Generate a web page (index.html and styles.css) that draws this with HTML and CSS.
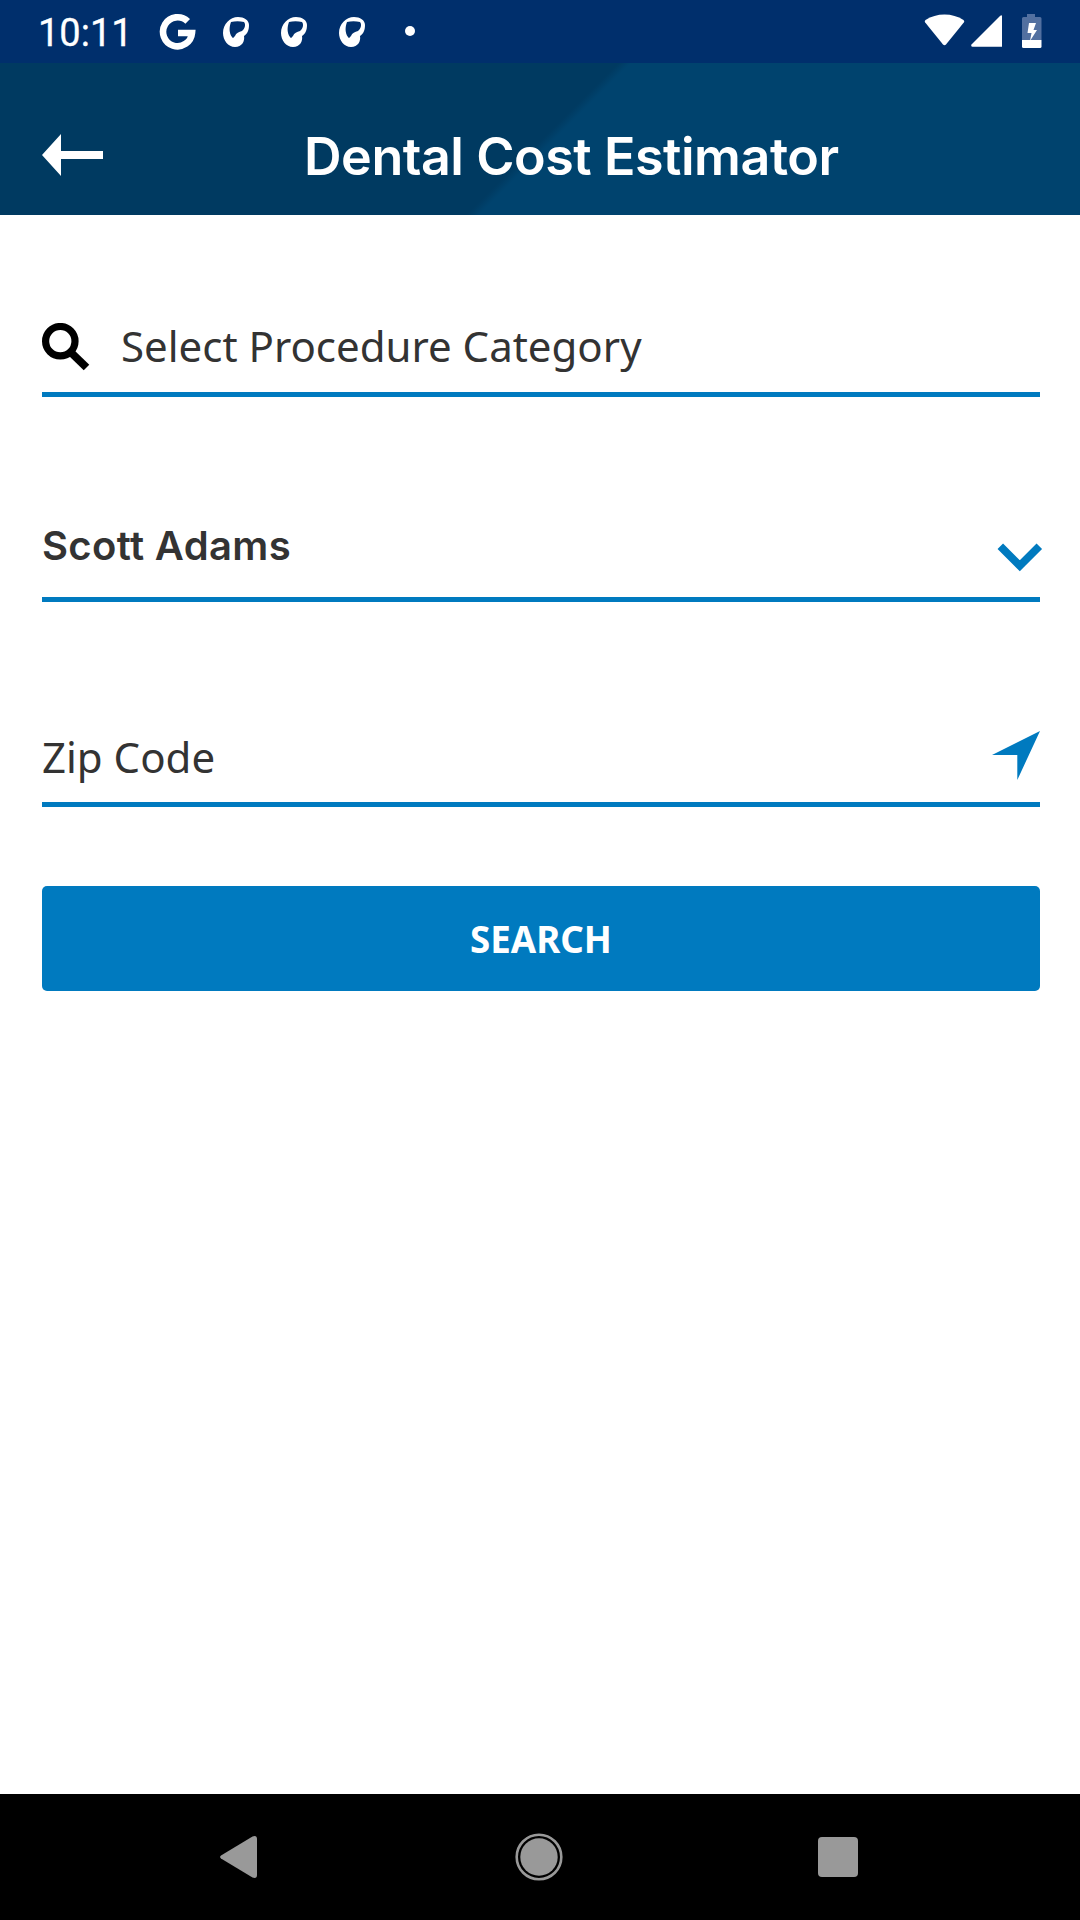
FILE: index.html
```html
<!DOCTYPE html>
<html lang="en">
<head>
<meta charset="utf-8">
<title>Dental Cost Estimator</title>
<link rel="stylesheet" href="styles.css">
</head>
<body>
<div class="status">
  <span class="time">10:11</span>
  <svg class="google" width="38" height="38" viewBox="0 0 38 38"><path d="M28.700 8.400A14.500 14.500 0 1 0 33 20H19" fill="none" stroke="#fff" stroke-width="6.600"/></svg>
  <svg class="blob" width="28" height="32" viewBox="0 0 28 32"><path class="shape" fill-rule="evenodd" d="M16 1C22 1 27 4 27 9C27 15 25 18 22 20C23 25 20 31 13 31C6 31 1 24 1 17C1 8 8 1 16 1ZM9 6C7 11 7 17 10 21C11 23 12 21 13 20C14 17 17 16 20 15C23 13 24 8 22 6C18 5 13 5 9 6Z"/></svg>
  <svg class="blob" width="28" height="32" viewBox="0 0 28 32"><path class="shape" fill-rule="evenodd" d="M16 1C22 1 27 4 27 9C27 15 25 18 22 20C23 25 20 31 13 31C6 31 1 24 1 17C1 8 8 1 16 1ZM9 6C7 11 7 17 10 21C11 23 12 21 13 20C14 17 17 16 20 15C23 13 24 8 22 6C18 5 13 5 9 6Z"/></svg>
  <svg class="blob" width="28" height="32" viewBox="0 0 28 32"><path class="shape" fill-rule="evenodd" d="M16 1C22 1 27 4 27 9C27 15 25 18 22 20C23 25 20 31 13 31C6 31 1 24 1 17C1 8 8 1 16 1ZM9 6C7 11 7 17 10 21C11 23 12 21 13 20C14 17 17 16 20 15C23 13 24 8 22 6C18 5 13 5 9 6Z"/></svg>
  <span class="dot"></span>
  <svg class="system" width="120" height="36" viewBox="0 0 120 36">
    <path fill="#fff" d="M2.200 9.500Q1 8 2.500 7Q11 1.500 21.500 1.500T40.500 7Q42 8 40.800 9.500L23 31.500Q21.500 33 20 31.500Z"/>
    <path fill="#fff" d="M48.500 31.500L77 3Q79 1.500 79 3.500V33.700H49.500Q47.500 33.500 48.500 31.500Z"/>
    <path fill="#5270a0" d="M104 1h8v3h5q1.500 0 1.500 1.500V27H99V5.500Q99 4 100.500 4h3.500Z"/>
    <path fill="#fff" d="M99 27h19.500v6.500q0 1.500-1.500 1.500h-16.500q-1.500 0-1.500-1.500Z"/>
    <path fill="#fff" d="M106 10h7l-2.500 7h3.500l-7 11 1.500-8h-4Z"/>
  </svg>
</div>
<header class="header">
  <svg width="62" height="42" viewBox="0 0 62 42"><path fill="#fff" d="M0 21L19 0V17H61V25H19V42Z"/></svg>
  <h1 class="title">Dental Cost Estimator</h1>
</header>
<main class="main">
  <div class="field category">
    <svg width="48" height="48" viewBox="0 0 48 48" fill="none" stroke="#000"><circle cx="18.300" cy="18.200" r="14.700" stroke-width="7.200"/><path d="M28.500 29L44.500 44.500" stroke-width="8"/></svg>
    <span>Select Procedure Category</span>
  </div>
  <div class="field member">
    <span class="name">Scott Adams</span>
    <svg width="46" height="30" viewBox="0 0 46 30"><path d="M3.300 3.300L22.800 22.800L42.300 3.300" fill="none" stroke="#007abf" stroke-width="7.800"/></svg>
  </div>
  <div class="field zip">
    <span>Zip Code</span>
    <svg width="48" height="49" viewBox="0 0 48 49"><path fill="#007abf" d="M48 0L25.300 49V24H0Z"/></svg>
  </div>
  <button class="search">SEARCH</button>
</main>
<nav class="nav">
  <svg width="38" height="44" viewBox="0 0 38 44"><path fill="#999" d="M1 20.500L32.500 1.500Q37 0 37 4V40Q37 44 32.500 42.500L1 23.500Q-.8 22 1 20.500Z"/></svg>
  <svg class="home" width="48" height="48" viewBox="0 0 48 48"><circle cx="24" cy="24" r="18.700" fill="#999"/><circle cx="24" cy="24" r="22.300" fill="none" stroke="#999" stroke-width="2.600"/></svg>
  <span class="recent"></span>
</nav>
</body>
</html>
```
FILE: styles.css
```css
* { box-sizing: border-box; }
body {
  margin: 0;
  width: 1080px;
  height: 1920px;
  display: flex;
  flex-direction: column;
  background: #fff;
  color: #333;
  font-family: "Noto Sans", sans-serif;
  font-size: 42px;
}
svg { display: block; flex: none; }
.status {
  height: 63px;
  display: flex;
  align-items: flex-start;
  padding-left: 38px;
  background: #002f6c;
}
.time {
  width: 121px;
  margin-top: 11px;
  color: #fff;
  font: 400 38px/44px Roboto, sans-serif;
  -webkit-text-stroke: 0.3px #fff;
}
.google { margin: 13px 25px 0 0; }
.blob { margin: 16px 30px 0 0; }
.shape { fill: #fff; }
.dot {
  width: 10px;
  height: 10px;
  margin: 26px 0 0 9px;
  border-radius: 50%;
  background: #fff;
}
.system { margin: 13px 37px 0 auto; }
.header {
  height: 152px;
  display: flex;
  align-items: flex-start;
  padding: 71px 0 0 42px;
  background: linear-gradient(135deg, #003a61 50.200%, #00436e 51.200%);
}
.title {
  margin: -9px 0 0 200px;
  color: #fff;
  font: 600 52px/64px Inter, sans-serif;
  letter-spacing: -0.45px;
  white-space: nowrap;
}
.main {
  flex: 1;
  padding: 0 40px 0 42px;
}
.field {
  height: 205px;
  display: flex;
  align-items: flex-end;
  justify-content: space-between;
  border-bottom: 5px solid #007abf;
  line-height: 56px;
}
.category {
  height: 182px;
  justify-content: flex-start;
  gap: 31px;
  padding-bottom: 18px;
}
.category svg { margin-bottom: 3px; }
.member { padding-bottom: 23px; }
.member svg { margin: 0 -3px 1px 0; }
.name {
  font: 600 40px/56px Inter, sans-serif;
  letter-spacing: 0.35px;
}
.zip { padding-bottom: 17px; }
.zip svg { margin-bottom: 5px; }
.search {
  display: block;
  width: 100%;
  height: 105px;
  margin-top: 79px;
  padding: 0;
  border: 0;
  border-radius: 5px;
  background: #007abf;
  color: #fff;
  font: 700 36.700px/56px "Noto Sans", sans-serif;
}
.nav {
  height: 126px;
  display: flex;
  align-items: center;
  justify-content: space-between;
  padding: 0 222px 0 220px;
  background: #000;
}
.home { position: relative; left: 1.300px; }
.recent {
  width: 40px;
  height: 40px;
  border-radius: 4px;
  background: #999;
}
```
